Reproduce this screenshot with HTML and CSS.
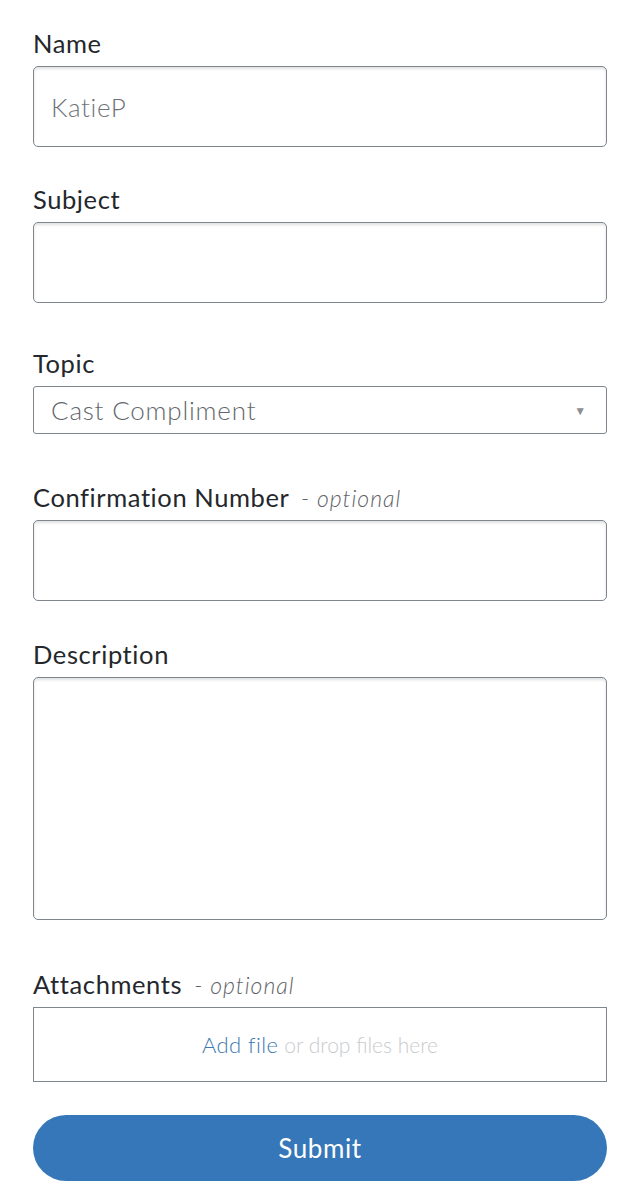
FILE: index.html
```html
<!DOCTYPE html>
<html>
<head>
  <title>Contact</title>
  <link rel="stylesheet" href="styles.css">
</head>
<body>
  <form class="form">
    <div class="field field-name">
      <label class="label">Name</label>
      <input class="input" type="text" value="KatieP">
    </div>
    <div class="field field-subject">
      <label class="label">Subject</label>
      <input class="input" type="text">
    </div>
    <div class="field field-topic">
      <label class="label">Topic</label>
      <div class="select">
        <span>Cast Compliment</span>
        <span class="caret">&#9660;</span>
      </div>
    </div>
    <div class="field field-confirmation">
      <label class="label">Confirmation Number <em class="optional">- optional</em></label>
      <input class="input" type="text">
    </div>
    <div class="field field-description">
      <label class="label">Description</label>
      <textarea class="input textarea"></textarea>
    </div>
    <div class="field field-attachments">
      <label class="label">Attachments <em class="optional">- optional</em></label>
      <div class="dropzone">
        <a class="add-file">Add file</a> <span class="drop-hint">or drop files here</span>
      </div>
    </div>
    <button class="submit" type="button">Submit</button>
  </form>
</body>
</html>
```

FILE: styles.css
```css
body {
  margin: 0;
  padding: 0;
  background: white;
  font-family: Lato, "Open Sans", sans-serif;
  color: #24272b;
}
.form {
  display: flex;
  flex-direction: column;
  padding: 28px 33px 0 33px;
}
.field {
  display: flex;
  flex-direction: column;
  gap: 8px;
}
.field-name {
  margin-bottom: 37px;
}
.field-subject {
  margin-bottom: 45px;
}
.field-topic {
  margin-bottom: 48px;
}
.field-confirmation {
  margin-bottom: 38px;
}
.field-description {
  margin-bottom: 49px;
}
.field-attachments {
  margin-bottom: 33px;
}
.label {
  display: block;
  height: 30px;
  font-size: 25.5px;
  line-height: 30px;
  letter-spacing: 0.6px;
  white-space: nowrap;
}
.optional {
  margin-left: 5px;
  font-size: 23px;
  line-height: 20px;
  font-weight: 300;
  letter-spacing: 1px;
  color: #5f6368;
}
.input {
  box-sizing: border-box;
  height: 81px;
  width: 100%;
  border: 1.5px solid #7f868e;
  border-radius: 5px;
  box-shadow: inset 0 2px 3px rgba(0, 0, 0, 0.12);
  padding: 0 17px;
  font-family: Lato, "Open Sans", sans-serif;
  font-size: 26px;
  font-weight: 300;
  letter-spacing: 0.6px;
  color: #6f7378;
  outline: none;
}
.textarea {
  height: 243px;
  resize: none;
}
.select {
  box-sizing: border-box;
  height: 48px;
  display: flex;
  align-items: center;
  justify-content: space-between;
  border: 1.5px solid #7f868e;
  border-radius: 3px;
  padding: 0 19px 0 17px;
  font-size: 26px;
  font-weight: 300;
  letter-spacing: 0.8px;
  color: #63676d;
}
.caret {
  font-size: 12px;
  color: #8a8d91;
}
.dropzone {
  box-sizing: border-box;
  height: 75px;
  display: flex;
  align-items: center;
  justify-content: center;
  gap: 6px;
  border: 1.5px solid #7f868e;
  font-size: 22px;
  font-weight: 300;
}
.add-file {
  color: #3a78b0;
  letter-spacing: 0.4px;
}
.drop-hint {
  font-size: 21px;
  color: #c9cbce;
}
.submit {
  height: 66px;
  border: none;
  border-radius: 33px;
  background: #3577b8;
  color: white;
  font-family: Lato, "Open Sans", sans-serif;
  font-size: 26px;
  letter-spacing: 0.6px;
}
```
